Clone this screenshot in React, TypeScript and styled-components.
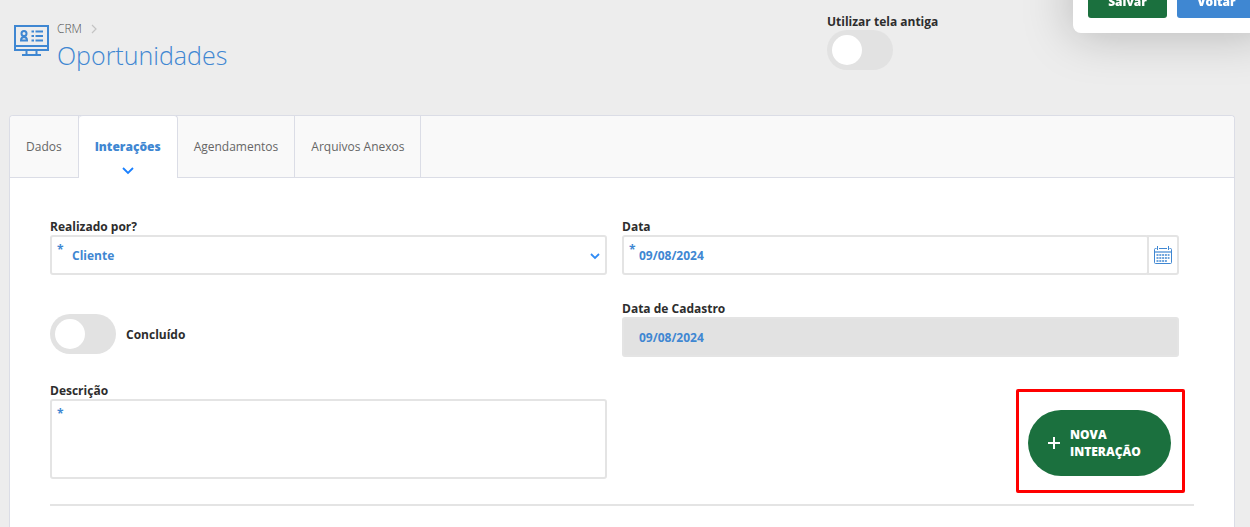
import React from "react";
import styled, { createGlobalStyle, css } from "styled-components";

const blue = "#3f87d2";
const green = "#1b703e";
const line = "#e4e4e4";
const cardLine = "#dbdde6";

const GlobalStyle = createGlobalStyle`
  * { box-sizing: border-box; }
  body {
    margin: 0;
    background: #ededed;
    color: #2d2d2d;
    font-family: "Open Sans", "Noto Sans", sans-serif;
    font-size: 12px;
    line-height: 18px;
    overflow: hidden;
  }
  button, input, select, textarea { font: inherit; }
`;

const Page = styled.div`
  display: flex;
  flex-direction: column;
  min-height: 100vh;
  padding: 0 15px 0 9px;
`;

const Header = styled.header`
  display: grid;
  grid-template-columns: 2fr 1fr;
  column-gap: 2px;
  height: 115px;
`;

const Heading = styled.div`
  display: flex;
  gap: 8px;
  padding: 20px 0 0 5px;
`;

const MonitorIcon = styled.svg`
  flex: none;
  width: 35px;
  height: 31px;
  margin-top: 5px;
`;

const Crumb = styled.nav`
  display: flex;
  align-items: center;
  gap: 9px;
  height: 18px;

  a {
    color: #555;
    font-weight: 300;
    text-decoration: none;
  }
`;

const Title = styled.h1`
  margin: 0;
  color: ${blue};
  font-size: 25px;
  font-weight: 300;
  line-height: 34px;
`;

const LegacyOption = styled.div`
  display: flex;
  flex-direction: column;
  align-items: flex-start;
  padding-top: 12px;
`;

const ActionPanel = styled.div`
  position: fixed;
  top: -31px;
  right: -21px;
  display: flex;
  gap: 10px;
  padding: 15px;
  border-radius: 8px;
  background: #fff;
  box-shadow: 0 0 50px rgba(0, 0, 0, 0.25);
`;

const ActionButton = styled.button<{ $color: string }>`
  width: 79px;
  height: 34px;
  padding: 2px 0 0;
  border: 0;
  border-radius: 3px;
  background: ${(p) => p.$color};
  color: #fff;
  font-weight: 800;
`;

const Card = styled.main`
  flex: 1;
  border: 1px solid ${cardLine};
  border-bottom: 0;
  border-radius: 4px 4px 0 0;
  background: #fff;
`;

const TabBar = styled.div`
  display: flex;
  height: 62px;
  border-bottom: 1px solid ${cardLine};
  border-radius: 4px 4px 0 0;
  background: #f9f9f9;
`;

const Tab = styled.button<{ $active?: boolean }>`
  position: relative;
  height: 61px;
  padding: 0 16px;
  border: 0;
  border-right: 1px solid ${cardLine};
  background: transparent;
  color: #666;

  ${(p) =>
    p.$active &&
    css`
      height: 63px;
      margin-top: -1px;
      border-top: 1px solid ${cardLine};
      border-radius: 4px 4px 0 0;
      background: #fff;
      color: ${blue};
      font-weight: 800;
    `}
`;

const TabArrow = styled.svg`
  position: absolute;
  bottom: 3px;
  left: 50%;
  width: 12px;
  height: 8px;
  margin-left: -6px;
`;

const Form = styled.form`
  padding: 39px 40px 0;
`;

const Fields = styled.div`
  display: grid;
  grid-template-columns: 1fr 1fr;
  gap: 24px 15px;
  padding: 0 15px 25px 0;
  border-bottom: 2px solid ${line};
`;

const Field = styled.div`
  display: flex;
  flex-direction: column;
`;

const Label = styled.label`
  height: 18px;
  font-weight: 700;
  line-height: 20px;
`;

const Control = styled.div`
  position: relative;
  display: flex;
`;

const Required = styled.span`
  position: absolute;
  top: 6px;
  left: 7px;
  color: ${blue};
  font-weight: 700;
  pointer-events: none;
`;

const boxed = css`
  flex: 1;
  min-width: 0;
  height: 40px;
  margin: 0;
  border: 2px solid ${line};
  border-radius: 3px;
  outline: 0;
  background: #fff;
  color: ${blue};
  font-weight: 700;
`;

const Select = styled.select`
  ${boxed}
  appearance: none;
  padding: 2px 30px 0 20px;
`;

const SelectArrow = styled.svg`
  position: absolute;
  top: 18px;
  right: 7px;
  width: 10px;
  height: 7px;
  pointer-events: none;
`;

const TextInput = styled.input`
  ${boxed}
  padding: 0 15px;

  &:disabled {
    background: #e2e2e2;
    opacity: 1;
  }
`;

const CalendarButton = styled.button`
  display: flex;
  align-items: center;
  justify-content: center;
  width: 32px;
  height: 40px;
  margin-left: -2px;
  padding: 0;
  border: 2px solid ${line};
  border-radius: 0 3px 3px 0;
  background: #fff;
`;

const TextArea = styled.textarea`
  ${boxed}
  height: 80px;
  padding: 8px 20px;
  resize: none;
`;

const SwitchRow = styled.div`
  display: flex;
  align-items: center;
  gap: 10px;
  height: 40px;
  margin-top: 15px;
`;

const Switch = styled.input`
  appearance: none;
  display: flex;
  align-items: center;
  width: 66px;
  height: 40px;
  margin: 0;
  padding: 0 5px;
  border-radius: 20px;
  background: #e2e2e2;

  &::before {
    content: "";
    width: 30px;
    height: 30px;
    border-radius: 50%;
    background: #fff;
  }

  &:checked {
    justify-content: flex-end;
    background: ${blue};
  }
`;

const AddArea = styled.div`
  display: flex;
  align-items: flex-start;
  justify-content: flex-end;
  padding: 29px 8px 0 0;
`;

const AddHolder = styled.div`
  position: relative;
`;

const Highlight = styled.div`
  position: absolute;
  inset: -21px -14px -17px -12px;
  border: 3px solid #f00;
  border-radius: 2px;
  pointer-events: none;
`;

const AddButton = styled.button`
  display: flex;
  align-items: center;
  gap: 10px;
  width: 143px;
  height: 66px;
  padding: 0 20px;
  border: 0;
  border-radius: 33px;
  background: ${green};
  color: #fff;
  font-weight: 800;
  line-height: 17px;
  text-align: left;

  svg {
    flex: none;
  }
`;

const Monitor = () => (
  <MonitorIcon viewBox="0 0 35 31" fill="none" stroke={blue} strokeWidth="2" aria-hidden="true">
    <path d="M1 1h33v24H1zM1 21h33M12.500 25v5M22.500 25v5M8 30h19" />
    <circle cx="10" cy="8.500" r="2.500" />
    <path d="M7 15.500c0-2 1-3.500 3-3.500s3 1.500 3 3.500z" />
    <path d="M17.500 6.500h2.500M17.500 11h2.500M17.500 15.500h2.500M21.500 6.500H29M21.500 11H29M21.500 15.500H29" />
  </MonitorIcon>
);

const Calendar = () => (
  <svg width="18" height="18" viewBox="0 0 18 18" fill="none" stroke={blue} aria-hidden="true">
    <path d="M2.500 2.500H1.500a1 1 0 0 0-1 1v13a1 1 0 0 0 1 1h15a1 1 0 0 0 1-1v-13a1 1 0 0 0-1-1h-1M5 2.500h8" />
    <path d="M3.500 0v4M14.500 0v4" />
    <path d="M0 6h18" strokeOpacity="0.6" strokeWidth="2" />
    <path d="M2.500 9h13M2.500 12h13M2.500 15h10.500" strokeWidth="1.600" strokeDasharray="2 0.800" />
  </svg>
);

export default function App() {
  return (
    <>
      <GlobalStyle />
      <Page>
        <Header>
          <Heading>
            <Monitor />
            <div>
              <Crumb aria-label="Navegação">
                <a href="#crm">CRM</a>
                <svg width="6" height="10" viewBox="0 0 6 10" fill="none" stroke="#c4c4c4" strokeWidth="1.200">
                  <path d="M1 1l4 4-4 4" />
                </svg>
              </Crumb>
              <Title>Oportunidades</Title>
            </div>
          </Heading>
          <LegacyOption>
            <Label htmlFor="legacy">Utilizar tela antiga</Label>
            <Switch id="legacy" type="checkbox" />
          </LegacyOption>
        </Header>

        <Card>
          <TabBar role="tablist">
            <Tab role="tab">Dados</Tab>
            <Tab role="tab" aria-selected="true" $active>
              Interações
              <TabArrow viewBox="0 0 12 8" fill="none" stroke="#1a80ff" strokeWidth="1.800">
                <path d="M1 1l5 5 5-5" />
              </TabArrow>
            </Tab>
            <Tab role="tab">Agendamentos</Tab>
            <Tab role="tab">Arquivos Anexos</Tab>
          </TabBar>

          <Form onSubmit={(e) => e.preventDefault()}>
            <Fields>
              <Field>
                <Label htmlFor="author">Realizado por?</Label>
                <Control>
                  <Select id="author" defaultValue="Cliente">
                    <option>Cliente</option>
                  </Select>
                  <Required>*</Required>
                  <SelectArrow viewBox="0 0 10 7" fill="none" stroke="#2f8bf5" strokeWidth="1.800">
                    <path d="M1 1l4 4 4-4" />
                  </SelectArrow>
                </Control>
              </Field>
              <Field>
                <Label htmlFor="date">Data</Label>
                <Control>
                  <TextInput id="date" defaultValue="09/08/2024" />
                  <Required>*</Required>
                  <CalendarButton type="button" aria-label="Abrir calendário">
                    <Calendar />
                  </CalendarButton>
                </Control>
              </Field>

              <SwitchRow>
                <Switch id="done" type="checkbox" />
                <Label htmlFor="done">Concluído</Label>
              </SwitchRow>
              <Field>
                <Label htmlFor="created">Data de Cadastro</Label>
                <Control>
                  <TextInput id="created" defaultValue="09/08/2024" disabled />
                </Control>
              </Field>

              <Field>
                <Label htmlFor="description">Descrição</Label>
                <Control>
                  <TextArea id="description" />
                  <Required>*</Required>
                </Control>
              </Field>
              <AddArea>
                <AddHolder>
                  <AddButton type="button">
                    <svg width="12" height="12" viewBox="0 0 12 12" stroke="#fff" strokeWidth="2">
                      <path d="M6 0v12M0 6h12" />
                    </svg>
                    <span>NOVA INTERAÇÃO</span>
                  </AddButton>
                  <Highlight />
                </AddHolder>
              </AddArea>
            </Fields>
          </Form>
        </Card>
      </Page>

      <ActionPanel>
        <ActionButton type="button" $color={green}>Salvar</ActionButton>
        <ActionButton type="button" $color={blue}>Voltar</ActionButton>
      </ActionPanel>
    </>
  );
}
